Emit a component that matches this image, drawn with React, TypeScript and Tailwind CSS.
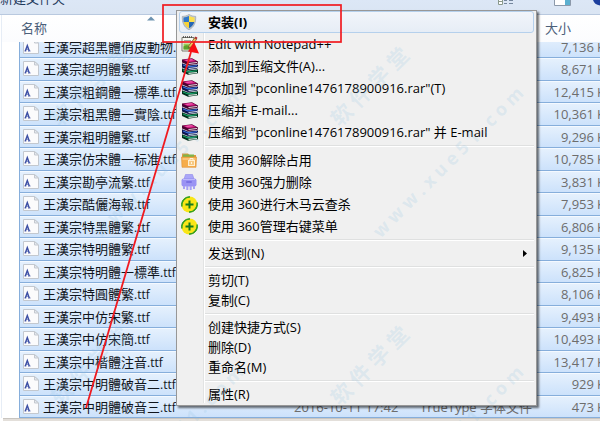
import React from 'react';

interface FontFile {
    name: string;
    size: string;
}

interface MenuEntry {
    label: string;
    icon?: React.ReactNode;
    primary?: boolean;
    submenu?: boolean;
}

const files: FontFile[] = [
    { name: '王漢宗超黑體俏皮動物', size: '7,136' },
    { name: '王漢宗超明體繁', size: '8,671' },
    { name: '王漢宗粗鋼體一標準', size: '12,415' },
    { name: '王漢宗粗黑體一實陰', size: '10,361' },
    { name: '王漢宗粗明體繁', size: '9,296' },
    { name: '王漢宗仿宋體一标准', size: '10,785' },
    { name: '王漢宗勘亭流繁', size: '3,831' },
    { name: '王漢宗酷儷海報', size: '7,953' },
    { name: '王漢宗特黑體繁', size: '6,806' },
    { name: '王漢宗特明體繁', size: '9,135' },
    { name: '王漢宗特明體一標準', size: '6,825' },
    { name: '王漢宗特圓體繁', size: '8,106' },
    { name: '王漢宗中仿宋繁', size: '9,493' },
    { name: '王漢宗中仿宋簡', size: '10,493' },
    { name: '王漢宗中楷體注音', size: '13,417' },
    { name: '王漢宗中明體破音二', size: '929' },
    { name: '王漢宗中明體破音三', size: '473' },
];

// --- Icons ---
const ShieldIcon = () => (
    <svg width="16" height="16" viewBox="0 0 16 16">
        <path d="M8 0.400C6 1.800 3.600 2.400 1.300 2.400C1 8.500 3 13.300 8 15.700C13 13.300 15 8.500 14.700 2.400C12.400 2.400 10 1.800 8 0.400Z" fill="#c3c9cd" stroke="#9aa2a8" strokeWidth="0.700" />
        <path d="M8 2.100V8H2.700C2.400 6.200 2.400 4.800 2.500 3.600C4.400 3.500 6 3 8 2.100Z" fill="#2f78c9" />
        <path d="M8 2.100V8H13.300C13.600 6.200 13.600 4.800 13.500 3.600C11.600 3.500 10 3 8 2.100Z" fill="#fbe04e" />
        <path d="M8 8V14.200C5 12.700 3.500 10.800 2.800 8Z" fill="#f8d236" />
        <path d="M8 8V14.200C11 12.700 12.500 10.800 13.200 8Z" fill="#2566b5" />
    </svg>
);

const NotepadIcon = () => (
    <svg width="17" height="16" viewBox="0 0 17 16">
        <path d="M1 1.500H13V15H1Z" fill="#f6f6f0" stroke="#77776d" />
        <path d="M2 1h10" stroke="#444" strokeWidth="1.500" strokeDasharray="1 1" />
        <path d="M2.500 7.500h8v6h-8z" fill="#9ccb56" />
        <path d="M2.500 10.500C5 8.500 8 9 10.500 12V13.500h-8z" fill="#5da12c" />
        <path d="M3 4.500h7" stroke="#a4aaa4" />
        <path d="M8 9.500L13.500 2L15.500 3.500L10 11L7.500 12Z" fill="#eec25a" stroke="#6c4b21" strokeWidth="0.700" />
        <path d="M13.500 2L14.500 0.500L16.500 1.800L15.500 3.500Z" fill="#b02a2a" />
    </svg>
);

const RarIcon = () => (
    <svg width="18" height="17" viewBox="0 0 18 17">
        <path d="M1 1.500L11 0.300L17 3.500L16.500 6L7 7L1 4.500Z" fill="#4b0431" />
        <path d="M1.800 1.800L10.800 0.800L15.500 3.300L7 4.300Z" fill="#d1187f" />
        <path d="M4 2L10.500 1.300L12.500 2.300L6 3Z" fill="#ef5fb0" />
        <path d="M7.500 5L16 4.100V5.100L7.500 6Z" fill="#e9d7e1" />
        <path d="M1 5.300L7 7.500L17 6.400V8.200L16.300 8.400V10.500L17 10.600L7 12L1 9.500Z" fill="#0e164d" />
        <path d="M2 6.500L7 8.300L16 7.300V8.300L7 9.400L2 7.500Z" fill="#3b6fe2" />
        <path d="M7.500 10L16 9V10.100L7.500 11.100Z" fill="#dbe4f5" />
        <path d="M1 10.300L7 12.500L17 11.300V15.200L7 16.700L1 14Z" fill="#03301d" />
        <path d="M2 11.500L7 13.300L16 12.300V13.300L7 14.400L2 12.500Z" fill="#17a56b" />
        <path d="M7.500 14.800L16 13.900V14.900L7.500 15.900Z" fill="#d7efe2" />
    </svg>
);

const UnlockFolderIcon = () => (
    <svg width="16" height="16" viewBox="0 0 16 16">
        <path d="M1 1.500h6l1.500 1.500H15v11.500H1z" fill="#dc9a3a" />
        <path d="M2 2.500h11V6H2z" fill="#7fb54a" />
        <path d="M0.500 5H15.500L15 15.300H1Z" fill="#f6ad4b" stroke="#dd9036" strokeWidth="0.600" />
        <path d="M1.500 6h13v2h-13z" fill="#f9c377" />
        <rect x="7.500" y="8.500" width="6" height="5" fill="#f7c983" stroke="#fff0d2" />
        <path d="M9 8V6.500h3V8M10.500 10v2" fill="none" stroke="#fff4dc" />
    </svg>
);

const ShredIcon = () => (
    <svg width="16" height="17" viewBox="0 0 16 17">
        <path d="M4.500 0.500h7l1.500 4.500H3z" fill="#aaa6f8" stroke="#8f88ea" strokeWidth="0.600" />
        <rect x="0.500" y="4.500" width="15" height="8" rx="2" fill="#9a93f4" />
        <path d="M2 5.500h12" stroke="#bdb9fb" />
        <rect x="5" y="7" width="6" height="2" rx="1" fill="#7b73e4" />
        <path d="M3 12v3M6.300 12v4M9.700 12v4M13 12v3" stroke="#a7a2f5" strokeWidth="2" />
    </svg>
);

const Plus360Icon = () => (
    <svg width="17" height="17" viewBox="0 0 17 17">
        <circle cx="8.500" cy="8.500" r="8" fill="#f9e617" />
        <path d="M0.900 10.500A7.600 7.600 0 0 1 9 0.900A8.800 8.800 0 0 0 0.900 10.500Z" fill="#2f9e24" stroke="#2f9e24" />
        <path d="M16.100 6.500A7.600 7.600 0 0 1 8 16.100A8.800 8.800 0 0 0 16.100 6.500Z" fill="#2f9e24" stroke="#2f9e24" />
        <path d="M8.500 4.500v8M4.500 8.500h8" stroke="#147a1c" strokeWidth="2" />
    </svg>
);

const FontFileIcon = () => (
    <svg width="18" height="16" viewBox="0 0 18 16" className="shrink-0">
        <path d="M1.500 0.500H12.500L16.500 4V14.500H1.500Z" fill="#fbfbfc" stroke="#c3c8cf" />
        <path d="M12.500 0.500V4H16.500Z" fill="#e6eaef" stroke="#c3c8cf" />
        <path d="M3.300 12L5.300 6.500L7.300 12" fill="none" stroke="#3c4fa5" strokeWidth="1.400" />
        <path d="M2.500 12H4.300M6 12H8.500M4 10.200H6.500" stroke="#3c4fa5" strokeWidth="0.800" />
    </svg>
);

const menuGroups: MenuEntry[][] = [
    [
        { label: '安装(I)', icon: <ShieldIcon />, primary: true },
        { label: 'Edit with Notepad++', icon: <NotepadIcon /> },
        { label: '添加到压缩文件(A)...', icon: <RarIcon /> },
        { label: '添加到 "pconline1476178900916.rar"(T)', icon: <RarIcon /> },
        { label: '压缩并 E-mail...', icon: <RarIcon /> },
        { label: '压缩到 "pconline1476178900916.rar" 并 E-mail', icon: <RarIcon /> },
    ],
    [
        { label: '使用 360解除占用', icon: <UnlockFolderIcon /> },
        { label: '使用 360强力删除', icon: <ShredIcon /> },
        { label: '使用 360进行木马云查杀', icon: <Plus360Icon /> },
        { label: '使用 360管理右键菜单', icon: <Plus360Icon /> },
    ],
    [{ label: '发送到(N)', submenu: true }],
    [{ label: '剪切(T)' }, { label: '复制(C)' }],
    [{ label: '创建快捷方式(S)' }, { label: '删除(D)' }, { label: '重命名(M)' }],
    [{ label: '属性(R)' }],
];

const Toolbar = () => (
    <header className="flex h-[15px] shrink-0 items-end justify-between overflow-hidden border-b border-[#b9c9df] bg-linear-to-b from-[#dce7f6] to-[#dae5f3]">
        <button type="button" className="mb-1.5 h-5 whitespace-nowrap leading-5 text-[#1e395b]">新建文件夹</button>
        <div className="flex h-full items-start">
            <button type="button" aria-label="视图" className="mr-[39px]">
                <svg width="18" height="6" viewBox="0 0 18 6">
                    <path d="M1.500 0v4.500h4V0M1.500 1.500h4" fill="#fff" stroke="#8b9a8c" />
                    <path d="M7 0.500h3M12 0.500h4M7 3.500h3M12 3.500h4" stroke="#74869c" />
                </svg>
            </button>
            <button type="button" aria-label="预览窗格" className="mr-[22px]">
                <svg width="17" height="6" viewBox="0 0 17 6">
                    <path d="M0.500 0V5.500H16.500V0" fill="#fff" stroke="#8c99aa" />
                    <path d="M11 0h5v5h-5z" fill="#5cb0d0" />
                </svg>
            </button>
            <button type="button" aria-label="帮助">
                <svg width="7" height="6" viewBox="0 0 7 6">
                    <path d="M0 0C1 3 3 5 7 5.500V0Z" fill="#1c3f9e" />
                </svg>
            </button>
        </div>
    </header>
);

const ListHeader = () => (
    <div className="flex h-[27px] shrink-0 items-center bg-linear-to-b from-white to-[#fbfcfe] pl-[19px] text-[#4c607a]">
        <button type="button" className="relative flex h-full w-[524px] items-center">
            名称
            <svg width="8" height="5" viewBox="0 0 8 5" className="absolute top-px left-[126px]">
                <path d="M0 4.500L4 0.500L8 4.500Z" fill="#6d93b0" />
            </svg>
        </button>
        <button type="button">大小</button>
    </div>
);

const FileList = () => (
    <div className="flex min-h-0 flex-1 flex-col justify-end overflow-hidden pl-[17px]">
        <table className="w-full table-fixed border-separate border-spacing-0 whitespace-nowrap">
            <colgroup>
                <col className="w-[275px]" />
                <col className="w-[126px]" />
                <col />
                <col className="w-[56px]" />
                <col className="w-[6px]" />
            </colgroup>
            <tbody className="text-[#6d6d6d] [&_td]:border-b [&_td]:border-[#86aedb] [&_td]:p-0 [&_td]:shadow-[inset_0_1px_0_#f4f9ff]">
                {files.map(file => (
                    <tr key={file.name} className="h-[22px] bg-linear-to-b from-[#e6f1fd] to-[#cbe1fb] even:h-[23px]">
                        <td className="border-l">
                            <div className="flex items-center gap-[3px] pl-[2px] leading-5 text-[#10151c]">
                                <FontFileIcon />
                                <span>{file.name}<span className="text-xs">.ttf</span></span>
                            </div>
                        </td>
                        <td className="leading-5">2016-10-11 17:42</td>
                        <td className="leading-5">TrueType 字体文件</td>
                        <td className="text-right leading-5">{file.size}</td>
                        <td className="overflow-hidden pl-[3px]! leading-5">KB</td>
                    </tr>
                ))}
            </tbody>
        </table>
    </div>
);

const MenuItem: React.FC<{ entry: MenuEntry }> = ({ entry }) => (
    <button
        type="button"
        role="menuitem"
        className={`flex w-full items-center border text-left leading-5 ${entry.primary ? 'rounded-[3px] border-[#b5d0ec] bg-linear-to-b from-[#f2f5fa] to-[#e6edf6] font-bold' : 'border-transparent'} ${entry.icon ? 'h-[22px]' : 'h-5'}`}
    >
        <span className="flex w-[28px] shrink-0 items-center pl-px">{entry.icon}</span>
        <span className="flex-1 whitespace-nowrap">{entry.label}</span>
        {entry.submenu && (
            <svg width="4" height="7" viewBox="0 0 4 7" className="mr-1.5">
                <path d="M0 0L4 3.500L0 7Z" fill="#000" />
            </svg>
        )}
    </button>
);

const ContextMenu = () => (
    <div role="menu" className="absolute top-[10px] left-[176px] w-[361px] border border-[#979797] bg-[#f0f0f0] px-[2px] pb-px text-black shadow-[2px_2px_2px_rgba(0,0,0,0.55)]">
        <div className="absolute inset-y-[2px] left-[26px] w-[2px] border-l border-[#e2e3e3] bg-white" />
        <div className="relative">
            {menuGroups.map((group, i) => (
                <React.Fragment key={group[0].label}>
                    {i > 0 && (
                        <div className={`ml-[26px] flex items-center ${i < 3 ? 'h-[6px]' : 'h-[7px]'}`}>
                            <hr className="h-[2px] w-full border-t border-[#dfe0e0] bg-white" />
                        </div>
                    )}
                    {group.map(entry => <MenuItem key={entry.label} entry={entry} />)}
                </React.Fragment>
            ))}
        </div>
    </div>
);

const Watermark: React.FC<{ className: string }> = ({ className }) => (
    <div className={`absolute size-[280px] whitespace-pre font-bold text-[#8fc0e0]/20 ${className}`}>
        <span className="absolute top-[87px] left-[90px] -translate-1/2 -rotate-45 text-[21px]">软 件 学 堂</span>
        <span className="absolute top-[162px] left-[168px] -translate-1/2 -rotate-45 text-[18px]">w w w . x u e 5 1 . c o m</span>
    </div>
);

const Annotations = () => (
    <div className="pointer-events-none absolute inset-0 overflow-hidden">
        <Watermark className="top-0 left-0" />
        <Watermark className="top-0 left-[280px]" />
        <Watermark className="top-[279px] left-0" />
        <Watermark className="top-[279px] left-[280px]" />
        <svg width="360" height="421" viewBox="0 0 360 421" className="absolute top-0 left-0">
            <rect x="163" y="5" width="178" height="37" fill="none" stroke="#f01a20" strokeWidth="1.700" />
            <path d="M86 408L191 52" stroke="#f01a20" strokeWidth="1.800" />
            <path d="M194 42L188 51.500L199 53.500Z" fill="#f80f14" />
        </svg>
    </div>
);

const App: React.FC = () => {
    return (
        <div className="relative flex h-screen flex-col overflow-hidden bg-white font-['Open_Sans','Noto_Sans_CJK_SC',sans-serif] text-[13px]">
            <Toolbar />
            <main className="ml-px flex min-h-0 flex-1 flex-col border-l border-[#e6edf6]">
                <ListHeader />
                <FileList />
            </main>
            <footer className="ml-[3px] h-[3px] shrink-0 border-t border-[#c9c5c0] bg-[#e3dfda]" />
            <ContextMenu />
            <Annotations />
        </div>
    );
};

export default App;
